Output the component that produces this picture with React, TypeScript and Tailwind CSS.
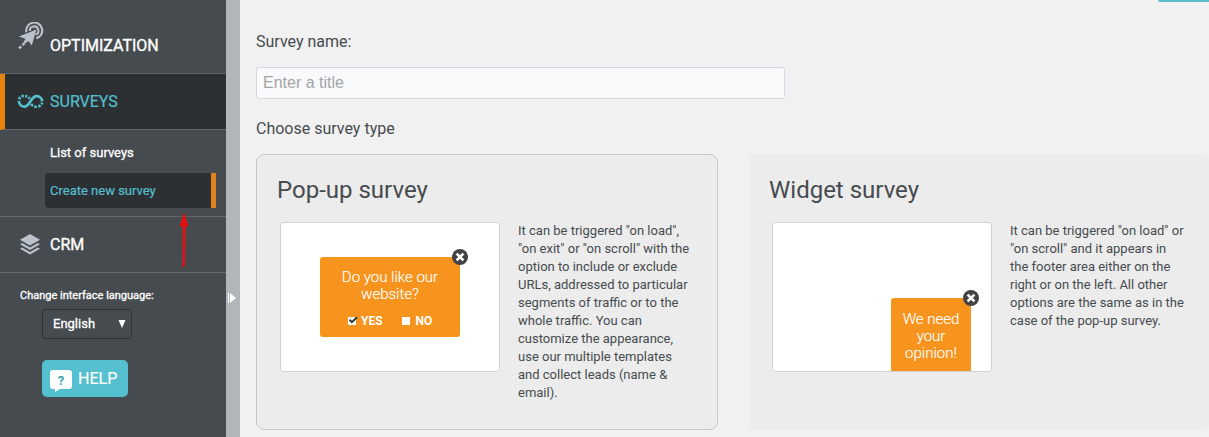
import type { ReactNode } from 'react';

const TargetIcon = () => (
  <svg width="27" height="29" viewBox="0 0 27 29" fill="none" className="text-[#bcc2cb]">
    <path d="M9.4 10.2A8 8 0 1 1 19.2 16.3" stroke="currentColor" strokeWidth="2.1" />
    <path d="M12.8 9A4.3 4.3 0 1 1 18.7 12.7" stroke="currentColor" strokeWidth="2" />
    <path d="M19.5 7.4L1.8 14.6l6.6 2.2L6.6 20.2l1.4 1.2 3.4-2.4 3.4 4.4z" fill="currentColor" />
    <path d="M7.6 21.2L.8 27.4" stroke="currentColor" strokeWidth="2.4" strokeDasharray="3 1.6" />
  </svg>
);

const InfinityIcon = () => (
  <svg width="27" height="15" viewBox="0 0 27 15" fill="none" stroke="#55bfcd" strokeWidth="2.7">
    <path d="M1.8 6.8C2.2 10.6 4.8 12.8 7.8 12.6C13 12.2 13.8 2.2 19.6 2.2C22.8 2.2 25 4.4 25.2 7.4" />
    <path d="M2.2 5.2C3.6 1.4 9.2.6 12.6 4.6" strokeDasharray="2.2 1.4" />
    <path d="M14 10.2C17.4 14.2 23.6 13.6 25.2 8.8" strokeDasharray="2.6 1.4" />
  </svg>
);

const LayersIcon = () => (
  <svg width="20" height="21" viewBox="0 0 20 21" fill="#bcc2cb">
    <path d="M10 0L20 5.8 10 11.6 0 5.8z" />
    <path d="M0 10.2l2.2-1.3L10 13.4l7.8-4.5L20 10.2 10 16z" />
    <path d="M0 14.7l2.2-1.3L10 17.9l7.8-4.5 2.2 1.3-10 5.8z" />
  </svg>
);

const CloseBadge = () => (
  <span className="absolute -top-2 -right-2 size-4">
    <svg width="16" height="16" viewBox="0 0 16 16">
      <circle cx="8" cy="8" r="8" fill="#414345" />
      <path d="M4.6 4.6l6.8 6.8M11.4 4.6l-6.8 6.8" stroke="#fff" strokeWidth="2.6" />
    </svg>
  </span>
);

type SurveyCardProps = {
  title: string;
  selected?: boolean;
  preview: ReactNode;
  children: ReactNode;
};

const SurveyCard = ({ title, selected, preview, children }: SurveyCardProps) => (
  <div
    className={`h-[276px] w-[462px] shrink-0 rounded-lg border bg-[#ececec] pt-[19px] pl-5 ${
      selected ? 'border-[#c6c7c8]' : 'border-[#eeeeee]'
    }`}
  >
    <h2 className="text-2xl leading-8">{title}</h2>
    <div className="mt-4 ml-[3px] flex gap-[18px]">
      <div className="h-[150px] w-[220px] shrink-0 rounded-[3px] border border-[#d2d2d2] bg-white">
        {preview}
      </div>
      <p className="w-44 text-[13px] leading-[18px]">{children}</p>
    </div>
  </div>
);

const Sidebar = () => (
  <aside className="w-[226px] shrink-0 bg-[#464b4f] text-white">
    <a className="flex h-[74px] items-center border-b border-[#61666a] pt-[18px] pl-[17px]">
      <span className="-mt-[18px] w-[33px]">
        <TargetIcon />
      </span>
      <span className="text-base [-webkit-text-stroke:0.35px]">OPTIMIZATION</span>
    </a>
    <a className="flex h-14 items-center border-b border-l-[5px] border-b-[#61666a] border-l-[#e8850c] bg-[#2c3033] pl-3 text-[#55bfcd]">
      <span className="w-[33px]">
        <InfinityIcon />
      </span>
      <span className="text-base [-webkit-text-stroke:0.2px]">SURVEYS</span>
    </a>
    <div className="h-[87px] border-b border-[#61666a] pt-[11px] pl-[45px] text-[13px]">
      <a className="flex h-6 items-center pl-[5px] [-webkit-text-stroke:0.3px]">List of surveys</a>
      <a className="mt-2 flex h-[35px] w-[171px] items-center rounded-l-sm border-r-[5px] border-[#de841b] bg-[#2c3033] pl-[5px] text-[#55bfcd] [-webkit-text-stroke:0.2px]">
        Create new survey
      </a>
    </div>
    <a className="flex h-14 items-center border-b border-[#61666a] pl-5">
      <span className="w-[30px]">
        <LayersIcon />
      </span>
      <span className="text-base [-webkit-text-stroke:0.35px]">CRM</span>
    </a>
    <div className="pt-3.5 pl-5">
      <div className="text-[11px] leading-[18px] [-webkit-text-stroke:0.3px]">Change interface language:</div>
      <div className="mt-[4px] ml-[22px] flex h-[30px] w-[90px] items-center justify-between rounded-[3px] border border-[#303437] pr-[5px] pl-2.5 text-[13px] [-webkit-text-stroke:0.3px]">
        English
        <svg width="8" height="8" viewBox="0 0 8 8" fill="#fff">
          <path d="M.5 0h7L4 8z" />
        </svg>
      </div>
      <button className="mt-[21px] ml-[22px] flex h-[37px] w-[86px] items-center gap-1.5 rounded-[5px] bg-[#54bfce] pl-2">
        <svg width="22" height="22" viewBox="0 0 22 22" className="mt-1">
          <path d="M3 0h16a3 3 0 0 1 3 3v13a3 3 0 0 1-3 3h-9l-5 3v-3H3a3 3 0 0 1-3-3V3a3 3 0 0 1 3-3z" fill="#fff" />
          <text x="11" y="14.5" textAnchor="middle" fontSize="13" fontWeight="700" fill="#3c9fae">
            ?
          </text>
        </svg>
        <span className="text-base [-webkit-text-stroke:0.2px]">HELP</span>
      </button>
    </div>
  </aside>
);

const App = () => (
  <div className="relative flex h-[437px] w-[1209px] overflow-hidden bg-[#f1f1f1] font-[Roboto,sans-serif] text-[#464b4f]">
    <Sidebar />

    {/* collapse handle */}
    <div className="w-3.5 shrink-0 bg-[#b1b6bb] pt-[293px] pl-0.5">
      <svg width="8" height="10" viewBox="0 0 8 10" fill="#fff">
        <path d="M0 0h1v10H0zM2 0l6 5-6 5z" />
      </svg>
    </div>

    <main className="flex-1 overflow-hidden pl-4">
      <div className="ml-[902px] h-0.5 w-20 rounded-b-sm bg-[#5dbcc8]" />
      <div className="mt-[30px] text-base leading-5">Survey name:</div>
      <input
        className="mt-[15px] block h-8 w-[529px] rounded-[3px] border border-[#d3d8e2] bg-[#f9fafc] px-1.5 font-['Liberation_Sans',sans-serif] text-base placeholder:text-[#a5a5a5]"
        placeholder="Enter a title"
      />
      <div className="mt-5 text-base leading-5">Choose survey type</div>
      <div className="mt-[15px] flex gap-[30px]">
        <SurveyCard
          title="Pop-up survey"
          selected
          preview={
            <div className="relative mt-[34px] ml-[39px] h-20 w-[140px] rounded-[3px] bg-[#f7941e] pt-3 text-center text-white">
              <CloseBadge />
              <div className="text-[15px] leading-[17px] font-light [-webkit-text-stroke:0.15px]">
                Do you like our
                <br />
                website?
              </div>
              <div className="mt-[10px] flex items-center pl-7 text-xs leading-4 font-bold">
                <svg width="10" height="9" viewBox="0 0 10 9" className="-mt-px mr-[3px]">
                  <path d="M0 1h8v8H0z" fill="#fff" />
                  <path d="M1.5 3.8l2.4 2.4L9 1.2" fill="none" stroke="#33363a" strokeWidth="2" />
                </svg>
                YES
                <span className="mr-1.5 ml-[19px] size-2 bg-white" />
                NO
              </div>
            </div>
          }
        >
          It can be triggered "on load", "on exit" or "on scroll" with the option to include or exclude URLs,
          addressed to particular segments of traffic or to the whole traffic. You can customize the appearance, use
          our multiple templates and collect leads (name &amp; email).
        </SurveyCard>
        <SurveyCard
          title="Widget survey"
          preview={
            <div className="relative mt-[75px] ml-[118px] h-[73px] w-20 rounded-t-[3px] bg-[#f7941e] pt-[13px] text-center text-[15px] leading-[17px] font-light text-white [-webkit-text-stroke:0.15px]">
              <CloseBadge />
              We need
              <br />
              your
              <br />
              opinion!
            </div>
          }
        >
          It can be triggered "on load" or "on scroll" and it appears in the footer area either on the right or on the
          left. All other options are the same as in the case of the pop-up survey.
        </SurveyCard>
      </div>
    </main>

    {/* pointer annotation */}
    <svg className="absolute top-[212px] left-[179px]" width="10" height="56" viewBox="0 0 10 56">
      <path d="M5 0l4.6 14.5H6.7L5.8 55H3.4L3.8 14.5H.6z" fill="#e81010" />
    </svg>
  </div>
);

export default App;
